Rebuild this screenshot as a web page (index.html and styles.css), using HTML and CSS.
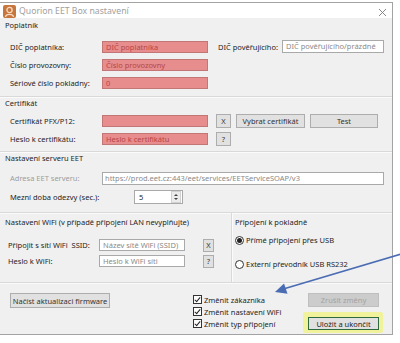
FILE: index.html
```html
<!DOCTYPE html>
<html>
<head>
    <meta charset="UTF-8">
    <title>Quorion EET Box nastavení</title>
    <link rel="stylesheet" href="styles.css">
</head>
<body>

    <div class="window">
        <div class="titlebar">
            <span class="app-icon">
                <svg width="13" height="13" viewBox="0 0 13 13">
                    <rect x="0" y="0" width="13" height="13" rx="2" fill="#c7773d"/>
                    <circle cx="6.5" cy="5" r="2.6" fill="none" stroke="#f6dcc0" stroke-width="1.3"/>
                    <path d="M2.5 12 C3 8.5 10 8.5 10.5 12" fill="none" stroke="#f6dcc0" stroke-width="1.3"/>
                </svg>
            </span>
            <span class="title">Quorion EET Box nastavení</span>
            <span class="close">
                <svg width="9" height="9" viewBox="0 0 9 9">
                    <path d="M1 1 L8 8 M8 1 L1 8" stroke="#7a7a7a" stroke-width="0.9"/>
                </svg>
            </span>
        </div>

        <div class="content">
            <section class="group payer">
                <div class="group-title">Poplatník</div>
                <div class="rows">
                    <div class="row">
                        <span class="lbl">DIČ poplatníka:</span>
                        <span class="field err">DIČ poplatníka</span>
                        <span class="lbl side">DIČ pověřujícího:</span>
                        <span class="field hint side-field">DIČ pověřujícího/prázdné</span>
                    </div>
                    <div class="row">
                        <span class="lbl">Číslo provozovny:</span>
                        <span class="field err">Číslo provozovny</span>
                    </div>
                    <div class="row">
                        <span class="lbl">Sériové číslo pokladny:</span>
                        <span class="field err">0</span>
                    </div>
                </div>
            </section>

            <section class="group cert">
                <div class="group-title">Certifikát</div>
                <div class="rows">
                    <div class="row">
                        <span class="lbl">Certifikát PFX/P12:</span>
                        <span class="field err"></span>
                        <span class="btn small">X</span>
                        <span class="btn pick">Vybrat certifikát</span>
                        <span class="btn test">Test</span>
                    </div>
                    <div class="row">
                        <span class="lbl">Heslo k certifikátu:</span>
                        <span class="field err">Heslo k certifikátu</span>
                        <span class="btn small">?</span>
                    </div>
                </div>
            </section>

            <section class="group server">
                <div class="group-title">Nastavení serveru EET</div>
                <div class="rows">
                    <div class="row">
                        <span class="lbl muted">Adresa EET serveru:</span>
                        <span class="field hint url">https://prod.eet.cz:443/eet/services/EETServiceSOAP/v3</span>
                    </div>
                    <div class="row">
                        <span class="lbl long">Mezní doba odezvy (sec.):</span>
                        <span class="field spinner">
                            <span class="spin-value">5</span>
                            <span class="spin-arrows">
                                <span class="up"></span>
                                <span class="down"></span>
                            </span>
                        </span>
                    </div>
                </div>
            </section>

            <section class="group wifi">
                <div class="wifi-left">
                    <div class="group-title">Nastavení WiFi (v případě připojení LAN nevyplňujte)</div>
                    <div class="rows">
                        <div class="row">
                            <span class="lbl">Připojit s sítí WiFi&nbsp; SSID:</span>
                            <span class="field hint wifi-field">Název sítě WiFi (SSID)</span>
                            <span class="btn tiny">X</span>
                        </div>
                        <div class="row">
                            <span class="lbl">Heslo k WiFi:</span>
                            <span class="field hint wifi-field">Heslo k WiFi síti</span>
                            <span class="btn tiny">?</span>
                        </div>
                    </div>
                </div>
                <div class="wifi-right">
                    <div class="group-title">Připojení k pokladně</div>
                    <div class="radios">
                        <div class="radio-row"><span class="radio on"></span>Přímé připojení přes USB</div>
                        <div class="radio-row"><span class="radio"></span>Externí převodník USB RS232</div>
                    </div>
                </div>
            </section>

            <section class="group bottom">
                <span class="btn firmware">Načíst aktualizaci firmware</span>
                <div class="checks">
                    <div class="check-row"><span class="check"></span>Změnit zákazníka</div>
                    <div class="check-row"><span class="check"></span>Změnit nastavení WiFi</div>
                    <div class="check-row"><span class="check"></span>Změnit typ připojení</div>
                </div>
                <div class="actions">
                    <span class="btn disabled">Zrušit změny</span>
                    <div class="highlight">
                        <span class="btn save">Uložit a ukončit</span>
                    </div>
                </div>
            </section>
        </div>
    </div>

    <svg class="arrow" width="400" height="343" viewBox="0 0 400 343">
        <line x1="401" y1="254" x2="285" y2="288.5" stroke="#4a6cb3" stroke-width="1.6"/>
        <polygon points="275,292 287.5,293.8 284,283.6" fill="#4a6cb3"/>
    </svg>

</body>
</html>
```

FILE: styles.css
```css
body {
  margin: 0;
  padding-top: 2px;
  width: 400px;
  height: 343px;
  overflow: hidden;
  position: relative;
  background-color: #ffffff;
  font-family: "Noto Sans", "Open Sans", sans-serif;
  font-size: 7.5px;
  color: #1e1e1e;
}

.window {
  width: 393px;
  height: 333px;
  box-sizing: border-box;
  border: 1px solid #a3a3a3;
  border-left: none;
  background-color: #f0f0f0;
  display: flex;
  flex-direction: column;
}

.titlebar {
  height: 15px;
  flex-shrink: 0;
  background-color: #ffffff;
  display: flex;
  align-items: center;
  padding-left: 3px;
  padding-right: 5px;
}

.app-icon {
  display: flex;
  margin-top: 2px;
}

.title {
  margin-left: 3px;
  font-size: 8.7px;
  color: #a0a0a0;
  margin-top: 1px;
}

.close {
  margin-left: auto;
  display: flex;
  margin-top: 3px;
}

.content {
  flex: 1;
  display: flex;
  flex-direction: column;
}

.group {
  border-top: 1px solid #d9d9d9;
  box-shadow: inset 0 1px 0 #fbfbfb;
  padding-left: 5px;
}

.group-title {
  height: 10px;
  line-height: 10px;
  white-space: nowrap;
}

.rows {
  display: flex;
  flex-direction: column;
}

.row {
  display: flex;
  align-items: center;
  padding-left: 5px;
}

.lbl {
  width: 92px;
  flex-shrink: 0;
  white-space: nowrap;
}

.lbl.muted {
  color: #9d9d9d;
}

.lbl.long {
  width: 125px;
}

.field {
  box-sizing: border-box;
  height: 12px;
  line-height: 10px;
  padding-left: 3px;
  border: 1px solid #a9a9a9;
  background-color: #ffffff;
  white-space: nowrap;
  overflow: hidden;
}

.field.err {
  width: 106px;
  background-color: #e88d8d;
  border-color: #c27676;
  color: #b64747;
}

.field.hint {
  color: #8a8a8a;
}

.lbl.side {
  width: 70px;
  text-align: right;
  margin-right: 4px;
}

.side-field {
  width: 102px;
  height: 13px;
}

.btn {
  box-sizing: border-box;
  display: flex;
  align-items: center;
  justify-content: center;
  height: 14px;
  background-color: #e1e1e1;
  border: 1px solid #adadad;
  color: #333333;
  white-space: nowrap;
}

.btn.small {
  width: 15px;
  margin-left: 8px;
}

.btn.pick {
  width: 69px;
  margin-left: 5px;
}

.btn.test {
  width: 68px;
  margin-left: 5px;
}

/* Poplatnik */
.payer {
  border-top: none;
  box-shadow: none;
  padding-top: 2px;
  padding-bottom: 7px;
}

.payer .rows {
  margin-top: 10px;
  gap: 5px;
}

.payer .row {
  height: 13px;
}

/* Certifikat */
.cert {
  padding-top: 1px;
  padding-bottom: 5px;
}

.cert .rows {
  margin-top: 6px;
  gap: 4px;
}

.cert .row {
  height: 14px;
}

/* Server */
.server {
  padding-top: 1px;
  padding-bottom: 8px;
}

.server .rows {
  margin-top: 8px;
  gap: 5px;
}

.server .row {
  height: 14px;
}

.field.url {
  width: 282px;
  height: 13px;
  padding-left: 2px;
  line-height: 11px;
}

.spinner {
  width: 49px;
  height: 14px;
  margin-left: -1px;
  display: flex;
  align-items: center;
  padding-left: 4px;
  color: #1e1e1e;
}

.spin-value {
  flex: 1;
}

.spin-arrows {
  width: 8px;
  height: 10px;
  margin-right: 1px;
  display: flex;
  flex-direction: column;
  align-items: center;
  justify-content: center;
  gap: 2px;
  background-color: #ececec;
  border: 1px solid #d2d2d2;
}

.up {
  width: 0;
  height: 0;
  border-left: 2px solid transparent;
  border-right: 2px solid transparent;
  border-bottom: 2px solid #444;
}

.down {
  width: 0;
  height: 0;
  border-left: 2px solid transparent;
  border-right: 2px solid transparent;
  border-top: 2px solid #444;
}

/* WiFi */
.wifi {
  display: flex;
  padding-left: 0;
}

.wifi-left {
  width: 231px;
  padding-left: 5px;
  padding-top: 4px;
  padding-bottom: 14px;
  box-sizing: border-box;
}

.wifi .rows {
  margin-top: 11px;
  gap: 2px;
}

.wifi .row {
  height: 14px;
  padding-left: 3px;
}

.wifi .lbl {
  width: 91px;
}

.wifi-field {
  width: 86px;
  height: 12px;
}

.btn.tiny {
  width: 11px;
  height: 13px;
  margin-left: 18px;
}

.wifi-right {
  flex: 1;
  border-left: 1px solid #d9d9d9;
  box-shadow: inset 1px 0 0 #fbfbfb;
  padding-left: 3px;
  padding-top: 4px;
}

.radios {
  margin-top: 8px;
  display: flex;
  flex-direction: column;
  gap: 14px;
}

.radio-row {
  height: 10px;
  display: flex;
  align-items: center;
  white-space: nowrap;
}

.radio {
  box-sizing: border-box;
  width: 9px;
  height: 9px;
  border: 1px solid #333333;
  border-radius: 50%;
  background-color: #ffffff;
  margin-right: 2px;
  display: flex;
  align-items: center;
  justify-content: center;
}

.radio.on::after {
  content: "";
  width: 5px;
  height: 5px;
  border-radius: 50%;
  background-color: #222222;
}

/* Bottom */
.bottom {
  flex: 1;
  display: flex;
  align-items: flex-start;
  padding-left: 10px;
  padding-top: 10px;
}

.btn.firmware {
  width: 100px;
  height: 15px;
}

.checks {
  margin-left: 83px;
  margin-top: 1px;
  display: flex;
  flex-direction: column;
  gap: 1px;
}

.check-row {
  height: 11px;
  display: flex;
  align-items: center;
  white-space: nowrap;
}

.check {
  box-sizing: border-box;
  position: relative;
  width: 9px;
  height: 9px;
  border: 1px solid #333333;
  background-color: #ffffff;
  margin-right: 2px;
}

.check::after {
  content: "";
  position: absolute;
  left: 2px;
  top: 0;
  width: 2px;
  height: 5px;
  border-right: 1px solid #222;
  border-bottom: 1px solid #222;
  transform: rotate(40deg);
}

.actions {
  margin-left: auto;
  margin-right: 9px;
  display: flex;
  flex-direction: column;
  align-items: flex-start;
}

.btn.disabled {
  width: 71px;
  background-color: #cccccc;
  border-color: #bfbfbf;
  color: #a3a3a3;
}

.highlight {
  margin-top: 5px;
  margin-left: -5px;
  padding: 5px 4px 3px 5px;
  background-color: #f0f29c;
  border-radius: 2px;
}

.btn.save {
  width: 71px;
  height: 13px;
  border-color: #2f6a3f;
  border-width: 1px;
  color: #1e1e1e;
}

.arrow {
  position: absolute;
  top: 0;
  left: 0;
  pointer-events: none;
}
```
